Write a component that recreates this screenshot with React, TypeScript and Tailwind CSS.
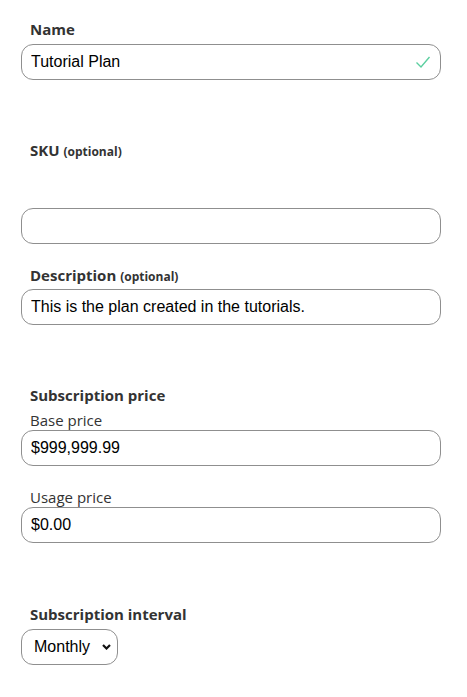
import React from 'react';

const labelCls = "block text-[15px] font-bold text-[#333] leading-[20px]";
const inputCls =
  "block w-[420px] h-[36px] rounded-[12px] border border-[#8f8f8f] bg-white px-[9px] text-[16px] text-black outline-none";

const Check = () => (
  <svg className="absolute right-[10px] top-[11px] w-[16px] h-[14px]" viewBox="0 0 16 14" fill="none">
    <path d="M1.5 7.5 L6 12 L14.5 2" stroke="#5ccfa0" strokeWidth="1.4" />
  </svg>
);

export default function App() {
  const arial = { fontFamily: '"Liberation Sans", Arial, sans-serif' };
  return (
    <div className="min-h-screen bg-white pl-[21px] pt-[19px]" style={{ fontFamily: '"Open Sans", "Noto Sans", sans-serif' }}>
      <label className={`${labelCls} pl-[9px]`}>Name</label>
      <div className="relative mt-[5px] w-[420px]">
        <input className={inputCls} style={arial} defaultValue="Tutorial Plan" />
        <Check />
      </div>

      <label className={`${labelCls} pl-[9px] mt-[60px]`}>
        SKU <span className="text-[12px]">(optional)</span>
      </label>
      <input className={`${inputCls} mt-[46px]`} style={arial} defaultValue="" />

      <label className={`${labelCls} pl-[9px] mt-[21px]`}>
        Description <span className="text-[12px]">(optional)</span>
      </label>
      <input
        className={`${inputCls} mt-[2px]`}
        style={arial}
        defaultValue="This is the plan created in the tutorials."
      />

      <label className={`${labelCls} pl-[9px] mt-[60px]`}>Subscription price</label>
      <label className="block pl-[9px] text-[15px] text-[#333] leading-[20px] mt-[5px]">Base price</label>
      <input className={`${inputCls} mt-0`} style={arial} defaultValue="$999,999.99" />

      <label className="block pl-[9px] text-[15px] text-[#333] leading-[20px] mt-[21px]">Usage price</label>
      <input className={`${inputCls} mt-0`} style={arial} defaultValue="$0.00" />

      <label className={`${labelCls} pl-[9px] mt-[61px]`}>Subscription interval</label>
      <div className="relative mt-[5px] w-[97px]">
        <select
          className="block w-[97px] h-[36px] appearance-none rounded-[12px] border border-[#8f8f8f] bg-white pl-[12px] text-[16px] text-black outline-none"
          style={arial}
          defaultValue="monthly"
        >
          <option value="monthly">Monthly</option>
          <option value="yearly">Yearly</option>
        </select>
        <svg className="pointer-events-none absolute right-[7px] top-[15px] w-[9px] h-[6px]" viewBox="0 0 9 6" fill="none">
          <path d="M1 1 L4.5 4.5 L8 1" stroke="#111" strokeWidth="2.2" />
        </svg>
      </div>
    </div>
  );
}
